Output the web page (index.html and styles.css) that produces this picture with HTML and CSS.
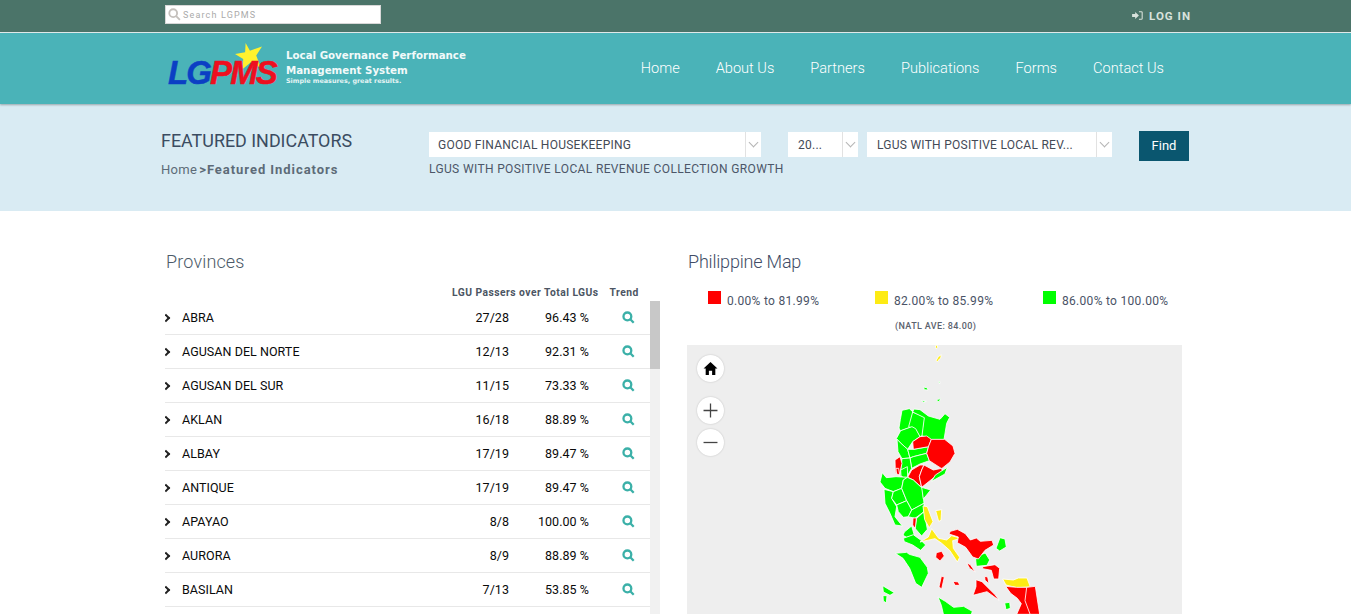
FILE: index.html
```html
<!DOCTYPE html>
<html lang="en">
<head>
<meta charset="utf-8">
<title>LGPMS</title>
<link rel="stylesheet" href="styles.css">
</head>
<body>
<div class="topbar">
  <div class="search">
    <svg class="search-icon" viewBox="0 0 14 14"><circle cx="5.6" cy="5.6" r="4.2"/><path d="M8.8 8.8L12.8 12.8"/></svg>
    <span>Search LGPMS</span>
  </div>
  <div class="login">
    <svg class="login-icon" viewBox="0 0 12 10"><path class="fill" d="M0 3.4h3.4V1L7.6 5 3.4 9V6.6H0z"/><path class="line" d="M7.6.8h2.6a1 1 0 0 1 1 1v6.4a1 1 0 0 1-1 1H7.6"/></svg>
    <span>LOG IN</span>
  </div>
</div>
<header class="header">
  <div class="logo">
    <div class="logo-mark">
      <svg class="star" viewBox="0 0 28 28"><path d="M11 0l4.500 8L28 3.500l-6 9.500L27 26l-10.500-6L8 27l.5-10.500L0 11.500l10.500-2z"/></svg>
      <span class="blue">LG</span><span class="red">PMS</span>
    </div>
    <div class="logo-text">
      <div class="logo-line">Local Governance Performance</div>
      <div class="logo-line">Management System</div>
      <div class="logo-tag">Simple measures, great results.</div>
    </div>
  </div>
  <nav class="nav">
    <a>Home</a><a>About Us</a><a>Partners</a><a>Publications</a><a>Forms</a><a>Contact Us</a>
  </nav>
</header>
<section class="band">
  <div class="band-title">
    <h1>FEATURED INDICATORS</h1>
    <div class="crumb">Home<b class="sep">&gt;</b><b>Featured Indicators</b></div>
  </div>
  <div class="filters">
    <div class="filter-row">
      <div class="select w-a"><span>GOOD FINANCIAL HOUSEKEEPING</span><i class="caret"></i></div>
      <div class="select w-b"><span>20...</span><i class="caret"></i></div>
      <div class="select w-c"><span>LGUS WITH POSITIVE LOCAL REV...</span><i class="caret"></i></div>
      <button class="find">Find</button>
    </div>
    <div class="filter-note">LGUS WITH POSITIVE LOCAL REVENUE COLLECTION GROWTH</div>
  </div>
</section>
<main class="main">
  <section class="provinces">
    <h2 class="prov-title">Provinces</h2>
    <div class="thead"><span class="th-pass">LGU Passers over Total LGUs</span><span class="th-trend">Trend</span></div>
    <div class="scroller">
      <div class="rows">
        <div class="row"><i class="chev"></i><span class="name">ABRA</span><span class="num">27/28</span><span class="pct">96.43 %</span><svg class="lens" viewBox="0 0 14 14"><circle cx="5.800" cy="5.800" r="4.200"/><path d="M8.900 8.900L12.600 12.600"/></svg></div>
        <div class="row"><i class="chev"></i><span class="name">AGUSAN DEL NORTE</span><span class="num">12/13</span><span class="pct">92.31 %</span><svg class="lens" viewBox="0 0 14 14"><circle cx="5.800" cy="5.800" r="4.200"/><path d="M8.900 8.900L12.600 12.600"/></svg></div>
        <div class="row"><i class="chev"></i><span class="name">AGUSAN DEL SUR</span><span class="num">11/15</span><span class="pct">73.33 %</span><svg class="lens" viewBox="0 0 14 14"><circle cx="5.800" cy="5.800" r="4.200"/><path d="M8.900 8.900L12.600 12.600"/></svg></div>
        <div class="row"><i class="chev"></i><span class="name">AKLAN</span><span class="num">16/18</span><span class="pct">88.89 %</span><svg class="lens" viewBox="0 0 14 14"><circle cx="5.800" cy="5.800" r="4.200"/><path d="M8.900 8.900L12.600 12.600"/></svg></div>
        <div class="row"><i class="chev"></i><span class="name">ALBAY</span><span class="num">17/19</span><span class="pct">89.47 %</span><svg class="lens" viewBox="0 0 14 14"><circle cx="5.800" cy="5.800" r="4.200"/><path d="M8.900 8.900L12.600 12.600"/></svg></div>
        <div class="row"><i class="chev"></i><span class="name">ANTIQUE</span><span class="num">17/19</span><span class="pct">89.47 %</span><svg class="lens" viewBox="0 0 14 14"><circle cx="5.800" cy="5.800" r="4.200"/><path d="M8.900 8.900L12.600 12.600"/></svg></div>
        <div class="row"><i class="chev"></i><span class="name">APAYAO</span><span class="num">8/8</span><span class="pct">100.00 %</span><svg class="lens" viewBox="0 0 14 14"><circle cx="5.800" cy="5.800" r="4.200"/><path d="M8.900 8.900L12.600 12.600"/></svg></div>
        <div class="row"><i class="chev"></i><span class="name">AURORA</span><span class="num">8/9</span><span class="pct">88.89 %</span><svg class="lens" viewBox="0 0 14 14"><circle cx="5.800" cy="5.800" r="4.200"/><path d="M8.900 8.900L12.600 12.600"/></svg></div>
        <div class="row"><i class="chev"></i><span class="name">BASILAN</span><span class="num">7/13</span><span class="pct">53.85 %</span><svg class="lens" viewBox="0 0 14 14"><circle cx="5.800" cy="5.800" r="4.200"/><path d="M8.900 8.900L12.600 12.600"/></svg></div>
      </div>
      <div class="track"><div class="thumb"></div></div>
    </div>
  </section>
  <section class="mapcol">
    <h2 class="map-title">Philippine Map</h2>
    <div class="legend">
      <div class="leg"><i class="sw red-bg"></i><span>0.00% to 81.99%</span></div>
      <div class="leg"><i class="sw yellow-bg"></i><span>82.00% to 85.99%</span></div>
      <div class="leg"><i class="sw green-bg"></i><span>86.00% to 100.00%</span></div>
    </div>
    <div class="natl">(NATL AVE: 84.00)</div>
    <div class="map">
      <svg class="geo" viewBox="687 345 495 269">
        <g transform="translate(870 340) scale(.33333)" class="provs">
          <g class="y">
            <path d="M196 17l6-2 1 8-5 4z"/><path d="M205 50l9-6-2 11-6 4-2 6-6-3z"/>
          </g>
          <g class="g">
            <path d="M161 141l11 3 2 6-11-1z"/><path d="M204 178l7-3-3 10-8-2z"/><path d="M206 125h4l-1 7z"/><path d="M154 182l15 2-9 3z"/>
            <path d="M96 211l22-5 10 9-2 45-35 13-4-9 4-25z"/>
            <path d="M128 216l37 16-7 54-8 4-13-20-11-6-10-4z"/>
            <path d="M128 216l4-9 18 2 25 19 35 10 15-17 14 11-9 18-8 49h-40l-26-12 7-54z"/>
            <path d="M92 272l34-12 11 6 13 24-22 15-15 23-18-16-16-16z"/>
            <path d="M81 298l14 14 18 16 7 26-24 2-12-21z"/>
            <path d="M113 328l17 0 46-8-6 20-40 10-10 4z"/>
            <path d="M120 354l10-4 40-10 8 22-28 10-25 13z"/>
            <path d="M96 356l24-2 5 31-13 23H90z"/>
          </g>
          <g class="r">
            <path d="M128 305l22-15 20-2 14 10-8 22-46 8z"/>
            <path d="M75 360l15-10 6 20-8 36-12-10z"/>
            <path d="M184 298h40l25 20 6 22-15 26-25 20-37-24-8-22 6-22z"/>
          </g>
        </g>
        <g transform="translate(870 470) scale(.33333)" class="provs">
          <g class="r">
            <path d="M113 22l12-22 25-15 12 0-7 15-7 20 7 32-25-22z"/>
            <path d="M162-15l28 15 25-5 2 10-22 15-40 32-7-32 7-20z"/>
            <path d="M78-5h8l3 20-9-3z"/>
          </g>
          <g class="g">
            <path d="M92 0l20-10 1 32-14 0-6-5z"/>
            <path d="M196 15l36-23-7 20-40 22z"/>
            <path d="M30 36l7-28 12 15 29-3 34 2-12 8-5 25-25 10-25-10z"/>
            <path d="M42 58l28 7-5 20 15 25-5 30 22 28-22-3-15-35-15-30z"/>
            <path d="M70 65l25-10 15 37-30 13-15-20z"/>
            <path d="M100 30l12-8 18 8 27 25 5 45-37 20-15-28-15-37z"/>
            <path d="M155 52l27 8-12 15-10 12z"/>
            <path d="M80 105l30-13 15 28-10 20-15 2-15-17z"/>
            <path d="M125 120l37-20 0 25-27 20-20-5z"/>
            <path d="M140 145l22-20 4 20 6 33-17 20-20-23z"/>
            <path d="M103 186l22-18 8 28-23 6-11-6z"/>
            <path d="M100 205l30-11 22 16 15 15-15 16-24-16-25-10z"/>
            <path d="M76 250l34-3 8 6 32 9 22 30 3 18-20 42-18-12-18-45-20-30z"/>
            <path d="M390 203l15 4 4 24-20 12-11-8z"/>
            <path d="M330 255l16-6 13 21-8 16-32 3-2-20z"/>
            <path d="M38 347l35 21-13 8-20-10z"/><path d="M39 377h12l-2 22-9-6z"/>
            <path d="M204 381l22 13 25 18 30-3 26 15-4 12h-82l-7-30z"/>
            <path d="M404 399l15-2 2 18-13 4z"/>
          </g>
          <g class="y">
            <path d="M159 108l13 2 17 45-11 18-14-24z"/>
            <path d="M185 176l21 29 24 5 15-13 28 8-25 7 2 23 19 27-7 14-23-35-25-22-19-13-45 10 25-15z"/>
            <path d="M197 122l18-3-2 32-7 3z"/>
            <path d="M398 327l32 3 15-6 26 0 10 27-41 2-32-8z"/>
          </g>
          <g class="r">
            <path d="M129 144h10l-3 32-8-11z"/>
            <path d="M241 184l21-6 24 13 15 19 18-6 12 10 35-3 5 14-26 16-20 26-17-6-21-29-25-14 3-17-28-9z"/>
            <path d="M338 290l37-6 14 11-3 32h-15l-7-26-26-5z"/>
            <path d="M199 248l16-4 8 14-13 15-13-11z"/>
            <path d="M290 279l11 5 15 22-17-11z"/>
            <path d="M318 329l18 6 40 40 11 16-36-26-42 11 9-26z"/>
            <path d="M214 319l9 2-8 36-8-6z"/>
            <path d="M249 334l16 2 4 10h-14z"/>
            <path d="M344 319l9 2 4 20-12-10z"/>
            <path d="M407 349l33 3h30l26-3 13 84h-69l14-32-12-16-20-15z"/>
            <path d="M470 352l-5 40 15 40" class="seam"/>
          </g>
        </g>
      </svg>
      <div class="controls">
        <button class="ctl home"><svg viewBox="0 0 14 14"><path d="M7 1L0.500 7h2v6h3V9h3v4h3V7h2z"/></svg></button>
        <button class="ctl plus"><svg viewBox="0 0 14 14"><path d="M7 0.500v13M.5 7h13"/></svg></button>
        <button class="ctl minus"><svg viewBox="0 0 14 14"><path d="M.5 7h13"/></svg></button>
      </div>
    </div>
  </section>
</main>
</body>
</html>
```
FILE: styles.css
```css
* { box-sizing: border-box; }
html, body { margin: 0; height: 614px; overflow: hidden; background: #fff; font-family: Roboto, "Liberation Sans", sans-serif; }

.topbar { height: 33px; background: #4b7469; border-bottom: 1px solid #e4eeee; display: flex; justify-content: space-between; padding: 5px 160px 0 165px; }
.search { width: 216px; height: 19px; background: #fff; border: 1px solid #d8d8d8; display: flex; align-items: center; gap: 2px; padding-left: 2px; color: #aaa; font-size: 9px; letter-spacing: 1.160px; }
.search-icon { width: 13px; height: 13px; fill: none; stroke: #c4c0bc; stroke-width: 2; }
.login { display: flex; align-items: center; gap: 6px; height: 21px; color: #d8e2dc; font-size: 11.500px; font-weight: 700; letter-spacing: 1px; }
.login-icon { width: 11px; height: 9px; }
.login-icon .fill { fill: #d8e2dc; }
.login-icon .line { fill: none; stroke: #d8e2dc; stroke-width: 1.200; }

.header { height: 71px; background: #4ab3b8; box-shadow: 0 1px 2px rgba(0,0,0,.3); position: relative; display: flex; justify-content: space-between; padding: 0 187px 0 168px; }
.logo { display: flex; height: 71px; }
.logo-mark { position: relative; width: 118px; padding-top: 18px; font: italic 700 33px/44px "Liberation Sans", sans-serif; letter-spacing: -1.900px; -webkit-text-stroke: .5px currentColor; white-space: nowrap; }
.star { position: absolute; left: 67px; top: 10px; width: 27px; height: 27px; fill: #fff22e; }
.blue { color: #0b3fc4; position: relative; }
.red { color: #ee0f1f; position: relative; }
.logo-text { color: #f2fafa; font-family: "DejaVu Sans", sans-serif; font-weight: 700; padding-top: 15px; }
.logo-line { font-size: 10.250px; line-height: 14.500px; white-space: nowrap; }
.logo-tag { font-size: 6.400px; line-height: 9px; white-space: nowrap; color: #e4f4f4; }
.nav { display: flex; gap: 36px; align-items: center; color: #fff; font-size: 14.600px; font-weight: 300; height: 70px; }

.band { height: 107px; background: #d9ebf3; display: flex; padding: 26px 0 0 161px; }
.band-title { width: 268px; }
h1 { margin: 0; font-size: 17.900px; line-height: 21px; font-weight: 400; color: #3b4c61; }
.crumb { margin-top: 10px; font-size: 13px; line-height: 18px; color: #5d6b78; letter-spacing: .3px; white-space: nowrap; }
.crumb b { letter-spacing: .95px; }
.crumb .sep { margin: 0 1px 0 2px; letter-spacing: 0; }
.filters { padding-top: 1px; }
.filter-row { display: flex; align-items: flex-start; }
.select { height: 25px; margin-top: 1px; background: #fff; display: flex; justify-content: space-between; align-items: center; font-size: 12px; color: #444a56; padding-left: 9px; letter-spacing: .26px; white-space: nowrap; }
.w-a { width: 332px; margin-right: 27px; }
.w-b { width: 70px; margin-right: 9px; padding-left: 10px; }
.w-c { width: 245px; margin-right: 27px; padding-left: 10px; }
.caret { width: 16px; height: 25px; border-left: 1px solid #e2e2e2; position: relative; flex: none; }
.caret::after { content: ""; position: absolute; left: 4px; top: 7px; width: 6px; height: 6px; border-right: 1.500px solid #b5b5b5; border-bottom: 1.500px solid #b5b5b5; transform: rotate(45deg); }
.find { width: 50px; height: 30px; border: 0; padding: 0 0 2px; background: #0a566f; color: #fff; font: 400 13px Roboto, sans-serif; }
.filter-note { margin-top: 0; font-size: 12px; line-height: 17px; color: #4c5668; letter-spacing: .36px; white-space: nowrap; }

.main { display: grid; grid-template-columns: 495px 495px; column-gap: 27px; padding: 38px 0 0 165px; }
h2 { margin: 0; font-size: 18px; line-height: 25px; font-weight: 300; color: #4c5a68; }
.prov-title { padding-left: 1px; letter-spacing: .15px; }
.thead { height: 27px; padding-top: 12px; display: flex; font-size: 10.300px; line-height: 13px; font-weight: 700; color: #4c5563; letter-spacing: .47px; padding-left: 287px; white-space: nowrap; }
.th-trend { margin-left: 11px; }
.scroller { display: flex; height: 313px; overflow: hidden; }
.rows { flex: 1; }
.row { height: 34px; border-bottom: 1px solid #e8e8e8; display: flex; align-items: center; font-size: 12.500px; color: #0a0a0a; }
.chev { width: 6px; height: 6px; margin-left: -2px; border-right: 2px solid #222; border-top: 2px solid #222; transform: rotate(45deg); flex: none; }
.name { width: 271px; margin-left: 13px; letter-spacing: .05px; white-space: nowrap; }
.num { width: 56px; text-align: right; letter-spacing: .05px; }
.pct { width: 80px; text-align: right; letter-spacing: .05px; }
.lens { width: 13px; height: 13px; margin-left: 33px; fill: none; stroke: #3bb0a8; stroke-width: 2.500; }
.track { width: 10px; background: #f1f1f1; }
.thumb { height: 68px; background: #c8c8c8; }

.map-title { color: #414c66; padding-left: 1px; letter-spacing: -.2px; }
.legend { display: flex; height: 41px; padding: 19px 0 0 21px; font-size: 12px; line-height: 16px; color: #4a5366; letter-spacing: .3px; white-space: nowrap; }
.leg { display: flex; gap: 6px; flex: none; width: 167px; }
.leg:nth-child(2) { width: 168px; }
.sw { width: 13px; height: 13px; flex: none; margin-top: -2px; }
.red-bg { background: #f00; }
.yellow-bg { background: #fdeb14; }
.green-bg { background: #0f0; }
.natl { height: 30px; padding-left: 208px; padding-top: 5px; font-size: 9px; line-height: 12px; font-weight: 500; color: #5b626e; letter-spacing: .38px; white-space: nowrap; }
.map { position: relative; height: 269px; background: #eee; overflow: hidden; }
.geo { display: block; width: 495px; height: 269px; }
.provs path { stroke: #fff; stroke-width: 2.500; stroke-linejoin: round; }
.provs .seam { fill: none; }
.g { fill: #0f0; }
.r { fill: #f00; }
.y { fill: #fdeb14; }
.controls { position: absolute; left: 10px; top: 10px; display: flex; flex-direction: column; }
.ctl { width: 27px; height: 27px; padding: 6px; border: 0; border-radius: 50%; background: #fff; box-shadow: 0 0 2px rgba(0,0,0,.2); display: block; }
.ctl svg { display: block; width: 15px; height: 15px; }
.home { margin-bottom: 15px; }
.plus { margin-bottom: 5px; }
.home svg { fill: #000; }
.plus svg, .minus svg { fill: none; stroke: #444; stroke-width: 1.200; }
```
